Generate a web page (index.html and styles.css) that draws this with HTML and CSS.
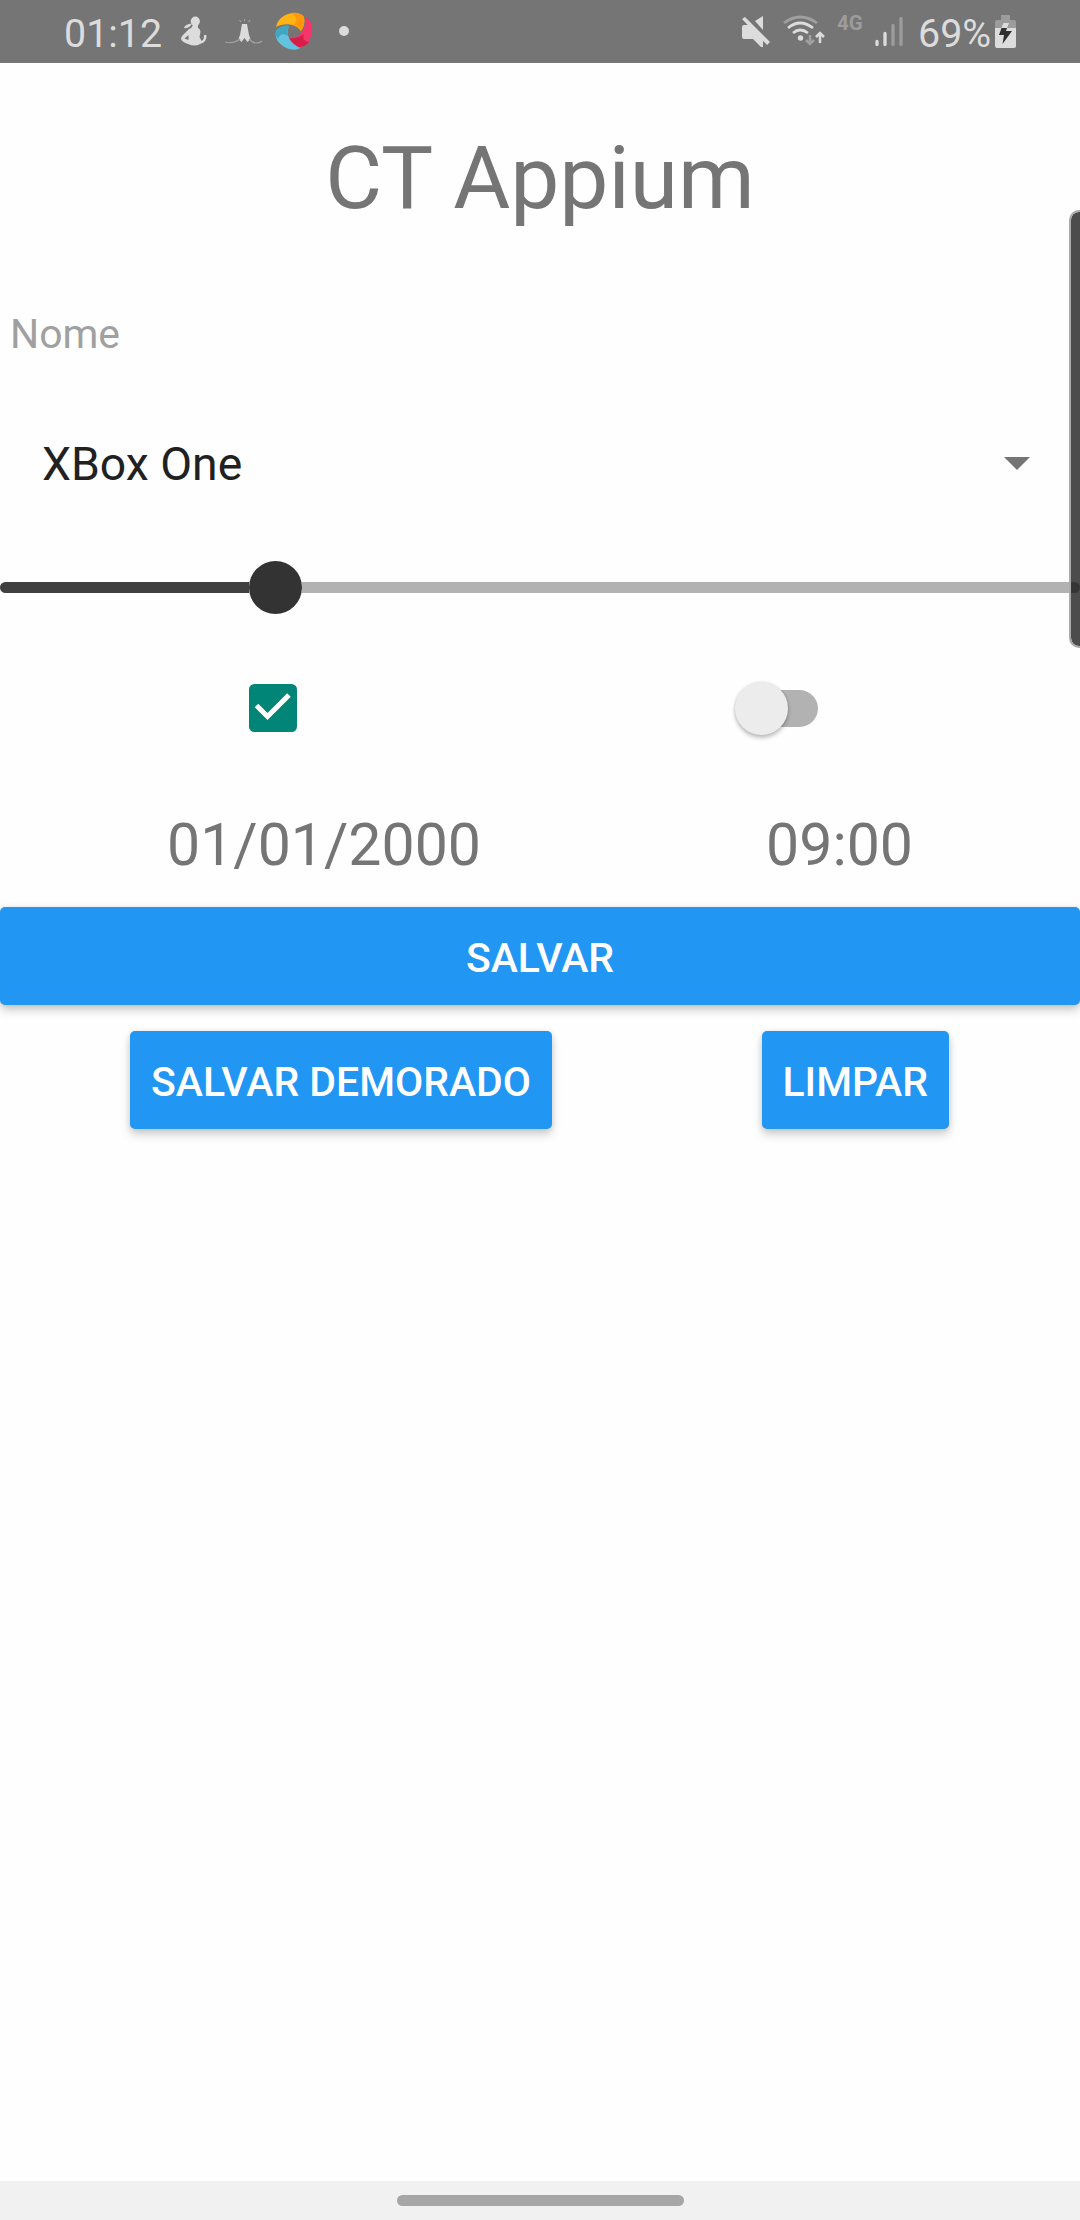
FILE: index.html
```html
<!DOCTYPE html>
<html lang="pt-BR">
<head>
<meta charset="utf-8">
<title>CT Appium</title>
<link rel="stylesheet" href="styles.css">
</head>
<body>
<div class="screen">
  <header class="status">
    <span class="clock">01:12</span>
    <svg class="notifications" width="170" height="63" viewBox="0 0 170 63">
      <g fill="#dcdcdc">
        <ellipse cx="15.300" cy="21.300" rx="4.600" ry="4.800"/>
        <path d="M4 28q1-4 8-4.500Q9 29 4 28z"/>
        <path d="M13 25h5v3q2.500 1 2.500 4l-1 5 2 4q2.500-1 2.500-5.500 1-1.500 2.500 0Q27 42 20 44q-5 3-12 0-6-2-7-5 0-2 2-4l6-6q3-1 4-4z"/>
        <path d="M62 24h5l2 11 1.500 4-3 3-3-4-3 4-3-3 1.500-4z"/>
      </g>
      <path d="M4.500 38.500l4-3.500v5z" fill="#757575"/>
      <path d="M45 42q9 2 15-3m9 0q4 4 7 4 4 0 6-2M59.500 20l1.500 2m9-2l-1.500 2M64.500 19v2" fill="none" stroke="#a0a0a0" stroke-width="1.200"/>
      <g transform="translate(-2 0)">
        <path d="M98 27c2-9 10-14 18-14 5 0 8 2 10 4 1 5 0 10-3 14-6-8-17-8-25-4z" fill="#ffb413"/>
        <path d="M113 13c7-1 11 1 13 4 1 5 0 10-3 14-2-3-5-5-8-6 5-3 4-9-2-12z" fill="#ff9909"/>
        <path d="M128 17c7 5 8 13 4 22-3 7-8 9-13 8-5-2-7-5-8-9 10 1 17-8 17-21z" fill="#f3376d"/>
        <path d="M111 38c6 1 11-1 15-4-2 5 1 8 5 8-5 6-15 8-20-4z" fill="#d51f48"/>
        <path d="M98 31c3-4 8-6 13-5-4 9 1 17 11 22-2 2-7 2-11 1C102 46 96 39 98 31z" fill="#62c3df"/>
        <path d="M98 31c3-4 8-6 13-5-2 4-2 7-1 10-5-3-8-2-10 3-2-3-3-5-2-8z" fill="#42a5c4"/>
      </g>
      <circle cx="164" cy="31" r="5" fill="#dcdcdc"/>
    </svg>
    <div class="system">
      <svg width="92" height="63" viewBox="0 0 92 63">
        <path d="M1 27q0-2 2-2h5l14 14v8h-2l-8-8H3q-2 0-2-2zM22 16v14l-8-9zM1 19l3-2 25 25-3 3z" fill="#dcdcdc"/>
        <g fill="none" stroke-width="2.700">
          <path d="M43 23q16-12 33 0" stroke="#a0a0a0"/>
          <path d="M47 28q12-10 25 0M52 33q7-6 15 0" stroke="#dcdcdc"/>
        </g>
        <circle cx="59.500" cy="38" r="2.700" fill="#dcdcdc"/>
        <path d="M69 35v9m-4-4l4 4 4-4" fill="none" stroke="#a0a0a0" stroke-width="2.500"/>
        <path d="M79 43V33m-4 4l4-4 4 4" fill="none" stroke="#dcdcdc" stroke-width="2.500"/>
      </svg>
      <span class="network">4G</span>
      <svg class="signal" width="30" height="63" viewBox="0 0 30 63" fill="none" stroke-width="3.300" stroke-linecap="round">
        <path d="M3 41.500v3M11 33.500v11" stroke="#dcdcdc"/>
        <path d="M19 25.500v19M27 18.500v26" stroke="#9c9c9c"/>
      </svg>
      <span class="percent">69%</span>
      <svg class="battery" width="21" height="63" viewBox="0 0 21 63">
        <path d="M6 15h9v5h4q2 0 2 2v6H0v-6q0-2 2-2h4z" fill="#9c9c9c"/>
        <path d="M0 28h21v18q0 2-2 2H2q-2 0-2-2z" fill="#dcdcdc"/>
        <path d="M8.500 23H14l-2 5H6.500z" fill="#dcdcdc"/>
        <path d="M6.500 28H12l-1 3h6L7.500 44l1.500-9H4z" fill="#303030"/>
      </svg>
    </div>
  </header>
  <main>
    <h1>CT Appium</h1>
    <div class="name">Nome</div>
    <div class="spinner"><span>XBox One</span><svg width="26" height="13" viewBox="0 0 26 13"><path d="M0 0h26L13 13z" fill="#757575"/></svg></div>
    <div class="slider"><div class="progress"></div><div class="knob"></div><div class="rest"></div></div>
    <div class="toggles">
      <svg width="48" height="48" viewBox="0 0 48 48"><rect width="48" height="48" rx="5.500" fill="#008577"/><path d="M7.500 21.500l11 11 21.500-21.500" fill="none" stroke="#fff" stroke-width="5"/></svg>
      <div class="switch"><div class="thumb"></div></div>
    </div>
    <div class="values"><span>01/01/2000</span><span>09:00</span></div>
    <button class="button">SALVAR</button>
    <div class="actions"><button class="button">SALVAR DEMORADO</button><button class="button">LIMPAR</button></div>
  </main>
  <footer><div class="handle"></div></footer>
  <div class="edge"></div>
</div>
</body>
</html>
```
FILE: styles.css
```css
* { box-sizing: border-box; }
body { margin: 0; background: #fefefe; font-family: Roboto, sans-serif; color: #757575; }
svg { display: block; flex: none; }
.screen { position: relative; width: 1080px; height: 2220px; overflow: hidden; display: flex; flex-direction: column; }
.status { height: 63px; flex: none; background: #757575; color: #dcdcdc; display: flex; padding: 0 64px 0 64px; font-size: 39.4px; line-height: 67px; white-space: nowrap; }
.clock { width: 116px; }
.system { display: flex; margin-left: auto; }
.network { font-size: 20.5px; font-weight: 700; line-height: 46px; color: #9c9c9c; width: 37px; margin-left: 4px; }
.percent { width: 77px; margin-left: 14px; }
main { flex: 1; display: flex; flex-direction: column; }
h1 { margin: 0; height: 231px; font-size: 87.5px; line-height: 231px; font-weight: 400; text-align: center; }
.name { height: 80px; line-height: 80px; font-size: 40.9px; color: #a0a0a0; padding-left: 10px; }
.spinner { height: 179px; display: flex; align-items: center; justify-content: space-between; padding: 0 50px 0 42px; font-size: 46.3px; color: #212121; }
.slider { height: 68px; display: flex; align-items: center; }
.progress { width: 249px; height: 11px; border-radius: 6px 0 0 6px; background: #404040; }
.knob { width: 53px; height: 53px; border-radius: 50%; background: #333; }
.rest { flex: 1; height: 11px; border-radius: 0 6px 6px 0; background: #b2b2b2; }
.toggles { height: 174px; display: flex; align-items: center; justify-content: space-between; padding: 0 262px 0 249px; }
.switch { width: 83px; height: 53px; display: flex; align-items: center; }
.switch::after { content: ""; width: 64px; height: 37px; margin-left: -34px; border-radius: 19px; background: #b2b2b2; }
.thumb { position: relative; z-index: 1; width: 53px; height: 53px; flex: none; border-radius: 50%; background: #ececec; box-shadow: 0 3px 4px rgba(0,0,0,.24), 0 0 3px rgba(0,0,0,.12); }
.values { height: 112px; display: flex; justify-content: space-between; padding: 0 167px; font-size: 59px; line-height: 99px; }
.button { border: 0; height: 98px; padding: 3px 21px 0; border-radius: 5px; background: #2196f3; color: #fff; font: 500 40.95px Roboto, sans-serif; white-space: nowrap; box-shadow: 0 6px 10px rgba(0,0,0,.16), 0 1px 6px rgba(0,0,0,.12); }
.actions { display: flex; justify-content: space-between; padding: 26px 131px 0 130px; }
footer { height: 39px; flex: none; display: flex; justify-content: center; align-items: center; background: #f1f1f1; }
.handle { width: 287px; height: 11px; border-radius: 6px; background: #a6a6a6; }
.edge { position: absolute; top: 210px; right: -9px; width: 20px; height: 438px; border: 2px solid #aaa; border-radius: 12px; background: rgba(0,0,0,.7); background-clip: padding-box; }
```
